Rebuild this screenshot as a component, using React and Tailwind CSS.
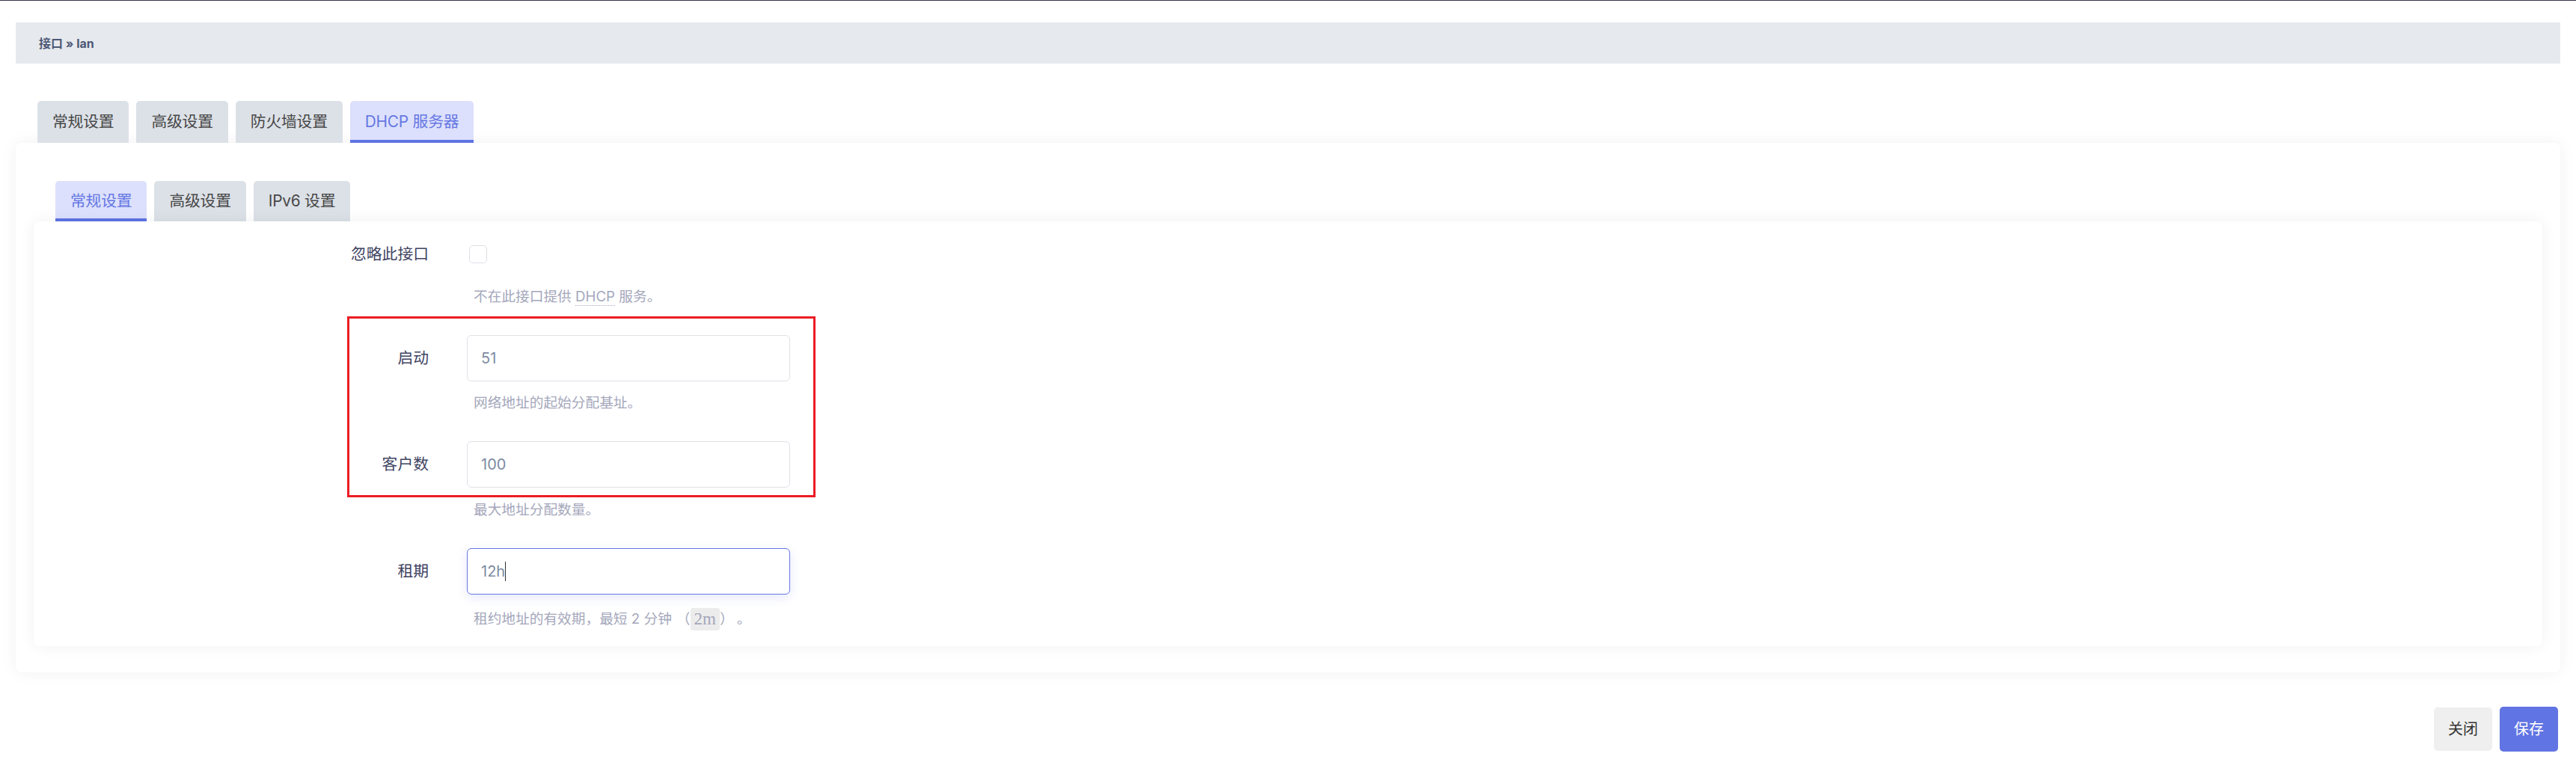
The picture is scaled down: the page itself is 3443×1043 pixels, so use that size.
import { useState } from 'react';

const outerTabs = ['常规设置', '高级设置', '防火墙设置', 'DHCP 服务器'];
const innerTabs = ['常规设置', '高级设置', 'IPv6 设置'];

function Tab({ label, active, onClick, height }) {
  return (
    <button
      onClick={onClick}
      className={`${height} px-[20px] rounded-t-[5px] text-[20.8px] leading-none tracking-[-0.2px] flex items-center ${
        active
          ? 'bg-[#dce0fc] text-[#6677e3] border-b-4 border-[#5f73e3] pt-[4px]'
          : 'bg-[#dce1e7] text-[#474747]'
      }`}
    >
      {label}
    </button>
  );
}

function Help({ children, className = '' }) {
  return (
    <div className={`pl-[9px] text-[18.7px] leading-[26px] text-[#a4a7bb] ${className}`}>{children}</div>
  );
}

function Field({ label, value, focused, help, helpClass }) {
  return (
    <div>
      <div className="flex items-center gap-[51px]">
        <div className="w-[528px] text-right text-[20.8px] text-[#3f4462]">{label}</div>
        <div
          className={`w-[432px] h-[62px] rounded-[6px] border bg-white flex items-center pl-[18px] text-[20px] text-[#7d8ba1] ${
            focused
              ? 'border-[#6677e3] shadow-[0_4px_14px_rgba(98,116,227,0.16)]'
              : 'border-[#dfe1e7]'
          }`}
        >
          {value}
          {focused && <span className="w-px h-[26px] bg-[#333]" />}
        </div>
      </div>
      <div className="ml-[579px]">
        <Help className={helpClass}>{help}</Help>
      </div>
    </div>
  );
}

export default function App() {
  const [outer, setOuter] = useState(3);
  const [inner, setInner] = useState(0);
  const [ignore, setIgnore] = useState(false);

  return (
    <div
      className="min-h-screen bg-white border-t border-[#34374a]"
      style={{ fontFamily: 'Inter, "Noto Sans CJK SC", sans-serif' }}
    >
      <div className="px-[21px] pt-[29px]">
        {/* breadcrumb */}
        <div className="h-[55px] bg-[#e6e9ed] flex items-center pl-[31px] text-[16px] font-bold text-[#4d5876]">
          接口 » lan
        </div>

        {/* outer tabs */}
        <div className="mt-[50px] pl-[29px] flex gap-[10px]">
          {outerTabs.map((t, i) => (
            <Tab key={t} label={t} active={outer === i} onClick={() => setOuter(i)} height="h-[56px]" />
          ))}
        </div>

        {/* outer card */}
        <div className="rounded-[8px] bg-white shadow-[0_0_22px_rgba(30,40,70,0.06)] px-[24px] pt-[51px] pb-[35px]">
          <div className="pl-[29px] flex gap-[10px]">
            {innerTabs.map((t, i) => (
              <Tab key={t} label={t} active={inner === i} onClick={() => setInner(i)} height="h-[54px]" />
            ))}
          </div>

          {/* inner card */}
          <div className="relative rounded-[8px] bg-white shadow-[0_0_22px_rgba(30,40,70,0.06)] pt-[32px] pb-[21px]">
            <div className="flex items-center gap-[51px]">
              <div className="w-[528px] text-right text-[20.8px] leading-[24px] text-[#3f4462]">忽略此接口</div>
              <button
                onClick={() => setIgnore(!ignore)}
                className={`ml-[3px] w-[24px] h-[24px] rounded-[5px] border ${ignore ? 'bg-[#6677e3] border-[#6677e3]' : 'bg-white border-[#dde0e6]'}`}
              />
            </div>
            <div className="ml-[579px] mt-[32px]">
              <Help>
                不在此接口提供{' '}
                <abbr className="no-underline border-b border-dotted border-[#a4a7bb]">DHCP</abbr> 服务。
              </Help>
            </div>

            <div className="mt-[38px] flex flex-col gap-[38px]">
              <Field label="启动" value="51" help="网络地址的起始分配基址。" helpClass="mt-[16px]" />
              <Field label="客户数" value="100" help="最大地址分配数量。" helpClass="mt-[17px]" />
              <Field
                label="租期"
                value="12h"
                focused
                help={
                  <span className="flex items-center">
                    租约地址的有效期，最短 2 分钟
                    <span className="ml-[6px]">（</span>
                    <code className="inline-block px-[5px] h-[30px] leading-[30px] rounded-[3px] bg-[#ececec] text-[#a4a7bb] text-[23px] font-['Liberation_Serif',serif]">2m</code>
                    <span>）</span>
                    <span className="ml-[4px]">。</span>
                  </span>
                }
                helpClass="mt-[18px]"
              />
            </div>

            {/* red annotation box */}
            <div className="absolute left-[419px] top-[127px] w-[626px] h-[242px] border-[3px] border-[#ec1c24] pointer-events-none" />
          </div>
        </div>
      </div>

      {/* footer buttons */}
      <div className="mt-[46px] pr-[24px] flex justify-end items-center gap-[10px]">
        <button className="h-[58px] px-[19px] rounded-[5px] bg-[#efefef] text-[20px] text-[#333]">关闭</button>
        <button className="h-[60px] px-[19px] rounded-[5px] bg-[#6174e3] text-[20px] text-white">保存</button>
      </div>
    </div>
  );
}
